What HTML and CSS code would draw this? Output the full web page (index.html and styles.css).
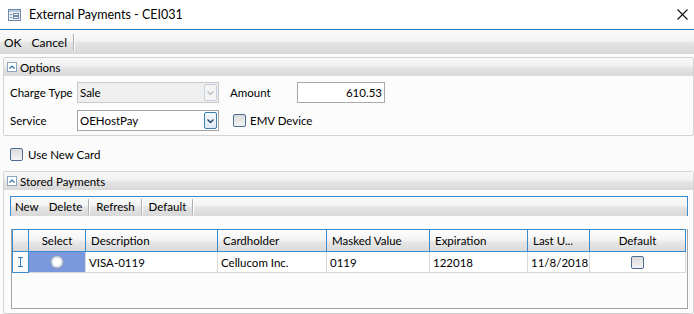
FILE: index.html
```html
<!DOCTYPE html>
<html lang="en-US">
<head>
    <meta charset="utf-8"/>
    <title>External Payments - CEI031</title>
    <link rel="stylesheet" href="styles.css">
</head>
<body>
    <div class="titlebar">
        <svg class="app-icon" width="13" height="12" viewBox="0 0 13 12">
            <rect x="0.5" y="0.5" width="12" height="11" fill="#eef2f7" stroke="#6d87a6"/>
            <rect x="1" y="1" width="11" height="2" fill="#b7c7da"/>
            <rect x="2" y="5" width="2" height="1" fill="#6d87a6"/>
            <rect x="2" y="8" width="2" height="1" fill="#6d87a6"/>
            <rect x="5.5" y="4.5" width="5" height="2" fill="#fff" stroke="#6d87a6"/>
            <rect x="5.5" y="7.5" width="5" height="2" fill="#fff" stroke="#6d87a6"/>
        </svg>
        <span class="title">External Payments - CEI031</span>
        <svg class="close" width="11" height="11" viewBox="0 0 11 11">
            <path d="M0.5 0.5 L10.5 10.5 M10.5 0.5 L0.5 10.5" stroke="#111" stroke-width="1.1" fill="none"/>
        </svg>
    </div>

    <div class="toolbar main-bar">
        <span class="tool first">OK</span>
        <span class="tool">Cancel</span>
        <span class="sep"></span>
    </div>

    <div class="group options-group">
        <div class="group-head">
            <span class="toggle"><svg width="6" height="4" viewBox="0 0 6 4"><path d="M0.5 3.5 L3 1 L5.5 3.5" stroke="#2a6fb0" stroke-width="1.2" fill="none"/></svg></span>
            Options
        </div>
        <div class="options">
            <div class="row">
                <span class="lbl">Charge Type</span>
                <div class="combo disabled">
                    <span class="combo-text">Sale</span>
                    <span class="combo-btn"><svg width="7" height="4" viewBox="0 0 7 4"><path d="M0.5 0.5 L3.5 3.5 L6.5 0.5" stroke="#b5bcc4" stroke-width="1.2" fill="none"/></svg></span>
                </div>
                <span class="lbl amount-lbl">Amount</span>
                <div class="textbox">610.53</div>
            </div>
            <div class="row">
                <span class="lbl">Service</span>
                <div class="combo">
                    <span class="combo-text">OEHostPay</span>
                    <span class="combo-btn"><svg width="7" height="4" viewBox="0 0 7 4"><path d="M0.5 0.5 L3.5 3.5 L6.5 0.5" stroke="#1b3e63" stroke-width="1.3" fill="none"/></svg></span>
                </div>
                <span class="check emv"></span>
                <span class="check-lbl">EMV Device</span>
            </div>
        </div>
    </div>

    <div class="newcard">
        <span class="check"></span>
        <span class="check-lbl">Use New Card</span>
    </div>

    <div class="group stored-group">
        <div class="group-head">
            <span class="toggle"><svg width="6" height="4" viewBox="0 0 6 4"><path d="M0.5 3.5 L3 1 L5.5 3.5" stroke="#2a6fb0" stroke-width="1.2" fill="none"/></svg></span>
            Stored Payments
        </div>
        <div class="toolbar stored-bar">
            <span class="tool first">New</span>
            <span class="tool">Delete</span>
            <span class="sep"></span>
            <span class="tool">Refresh</span>
            <span class="sep"></span>
            <span class="tool">Default</span>
            <span class="sep"></span>
        </div>
        <div class="grid">
            <div class="hcell rowhdr"></div>
            <div class="hcell center">Select</div>
            <div class="hcell">Description</div>
            <div class="hcell">Cardholder</div>
            <div class="hcell">Masked Value</div>
            <div class="hcell">Expiration</div>
            <div class="hcell">Last U...</div>
            <div class="hcell center">Default</div>

            <div class="cell rowhdr">
                <svg width="5" height="10" viewBox="0 0 5 10"><path d="M0 0.5 H5 M2.5 0.5 V9.5 M0 9.5 H5" stroke="#2f7fc4" stroke-width="1" fill="none"/></svg>
            </div>
            <div class="cell selected center">
                <svg width="14" height="14" viewBox="0 0 14 14">
                    <circle cx="7" cy="7" r="6.2" fill="#eef1f5" stroke="#8397b0" stroke-width="1"/>
                    <circle cx="7" cy="7" r="4.6" fill="#fff" stroke="#d3dae3" stroke-width="1"/>
                </svg>
            </div>
            <div class="cell">VISA-0119</div>
            <div class="cell">Cellucom Inc.</div>
            <div class="cell">0119</div>
            <div class="cell">122018</div>
            <div class="cell">11/8/2018</div>
            <div class="cell center"><span class="check"></span></div>
        </div>
    </div>
</body>
</html>
```

FILE: styles.css
```css
body {
    font-family: 'Lato', 'Liberation Sans', sans-serif;
    font-size: 11.5px;
    color: #000;
    margin: 0;
    width: 694px;
    height: 314px;
    overflow: hidden;
    background-color: #fbfbfb;
}

.titlebar {
    height: 29px;
    display: flex;
    align-items: center;
    padding: 0 6px 0 8px;
    background-color: #fff;
    border-bottom: 1px solid #2d7cc1;
}

.app-icon {
    margin-right: 8px;
}

.title {
    flex: 1;
    font-size: 12.5px;
}

.toolbar {
    display: flex;
    align-items: center;
    gap: 6px;
    background: linear-gradient(#fafafa 0%, #f3f3f3 45%, #e4e4e4 55%, #d8d8d8 100%);
}

.tool.first {
    margin-right: 4px;
}

.sep {
    width: 1px;
    height: 16px;
    background-color: #b0b0b0;
    border-right: 1px solid #fff;
}

.main-bar {
    height: 24px;
    padding-left: 4px;
    font-size: 12px;
}

.group {
    margin: 3px 0 0 3px;
    border: 1px solid #d3d3d3;
    border-radius: 2px;
    background-color: #fcfcfc;
}

.group-head {
    height: 18px;
    display: flex;
    align-items: center;
    gap: 3px;
    padding-left: 3px;
    background: linear-gradient(#f8f8f8 0%, #f1f1f1 45%, #e3e3e3 55%, #d9d9d9 100%);
}

.toggle {
    width: 8px;
    height: 8px;
    border: 1px solid #8aa5c2;
    background-color: #fff;
    display: flex;
    justify-content: center;
    align-items: center;
}

.options {
    display: flex;
    flex-direction: column;
    gap: 7px;
    padding: 6px 0 4px 6px;
}

.row {
    display: flex;
    align-items: center;
    height: 21px;
}

.lbl {
    width: 67px;
}

.amount-lbl {
    margin-left: 11px;
}

.combo {
    width: 142px;
    height: 21px;
    box-sizing: border-box;
    border: 1px solid #a5a5a5;
    background-color: #fff;
    display: flex;
    align-items: center;
    padding: 0 1px 0 2px;
}

.combo.disabled {
    background-color: #efefef;
    border-color: #c9c9c9;
}

.combo-text {
    flex: 1;
}

.combo-btn {
    width: 13px;
    height: 17px;
    box-sizing: border-box;
    border: 1px solid #3c7fb1;
    border-radius: 2px;
    background: linear-gradient(#f4f8fc, #dfeaf6);
    display: flex;
    justify-content: center;
    align-items: center;
}

.combo.disabled .combo-btn {
    border-color: #c6d3df;
    background: #f4f4f4;
}

.textbox {
    width: 88px;
    height: 21px;
    box-sizing: border-box;
    border: 1px solid #a9a9a9;
    background-color: #fff;
    text-align: right;
    line-height: 19px;
    padding-right: 2px;
}

.check {
    display: inline-block;
    width: 13px;
    height: 13px;
    box-sizing: border-box;
    border: 1px solid #4d6d93;
    border-radius: 2px;
    background: linear-gradient(#dadada, #f5f5f5);
}

.emv {
    margin-left: 14px;
}

.check-lbl {
    margin-left: 4px;
}

.newcard {
    display: flex;
    align-items: center;
    height: 13px;
    margin: 12px 0 10px 10px;
}

.newcard .check-lbl {
    margin-left: 5px;
}

.stored-group {
    height: 141px;
}

.stored-bar {
    height: 20px;
    box-sizing: border-box;
    margin: 6px 5px 0 6px;
    padding-left: 4px;
    border: 1px solid #3a8bd0;
    border-bottom: none;
}

.grid {
    margin: 13px 5px 0 7px;
    height: 80px;
    box-sizing: border-box;
    border: 1px solid #a3a3a3;
    border-top: none;
    background-color: #fcfcfc;
    display: grid;
    grid-template-columns: 17px 57px 132px 109px 103px 98px 62px 96px;
    grid-template-rows: 23px 21px;
    align-content: start;
}

.hcell,
.cell {
    box-sizing: border-box;
    display: flex;
    align-items: center;
    white-space: nowrap;
    overflow: hidden;
}

.hcell {
    padding-left: 5px;
    border-top: 1px solid #3a8bd0;
    border-right: 1px solid #3a8bd0;
    border-bottom: 1px solid #3a8bd0;
    background: linear-gradient(#fdfdfd 0%, #f4f4f4 45%, #e6e6e6 60%, #dadada 100%);
}

.hcell.rowhdr {
    border-left: 1px solid #3a8bd0;
}

.cell {
    padding-left: 3px;
    background-color: #fff;
    border-right: 1px solid #d8d8d8;
    border-bottom: 1px solid #d8d8d8;
}

.cell.rowhdr {
    border-left: 1px solid #3a8bd0;
    border-right: 1px solid #3a8bd0;
    border-bottom: 1px solid #3a8bd0;
    background-color: #fcfcfc;
    justify-content: center;
    padding-left: 0;
}

.center {
    justify-content: center;
    padding-left: 0;
}

.cell.selected {
    background-color: #7b97de;
}
```
